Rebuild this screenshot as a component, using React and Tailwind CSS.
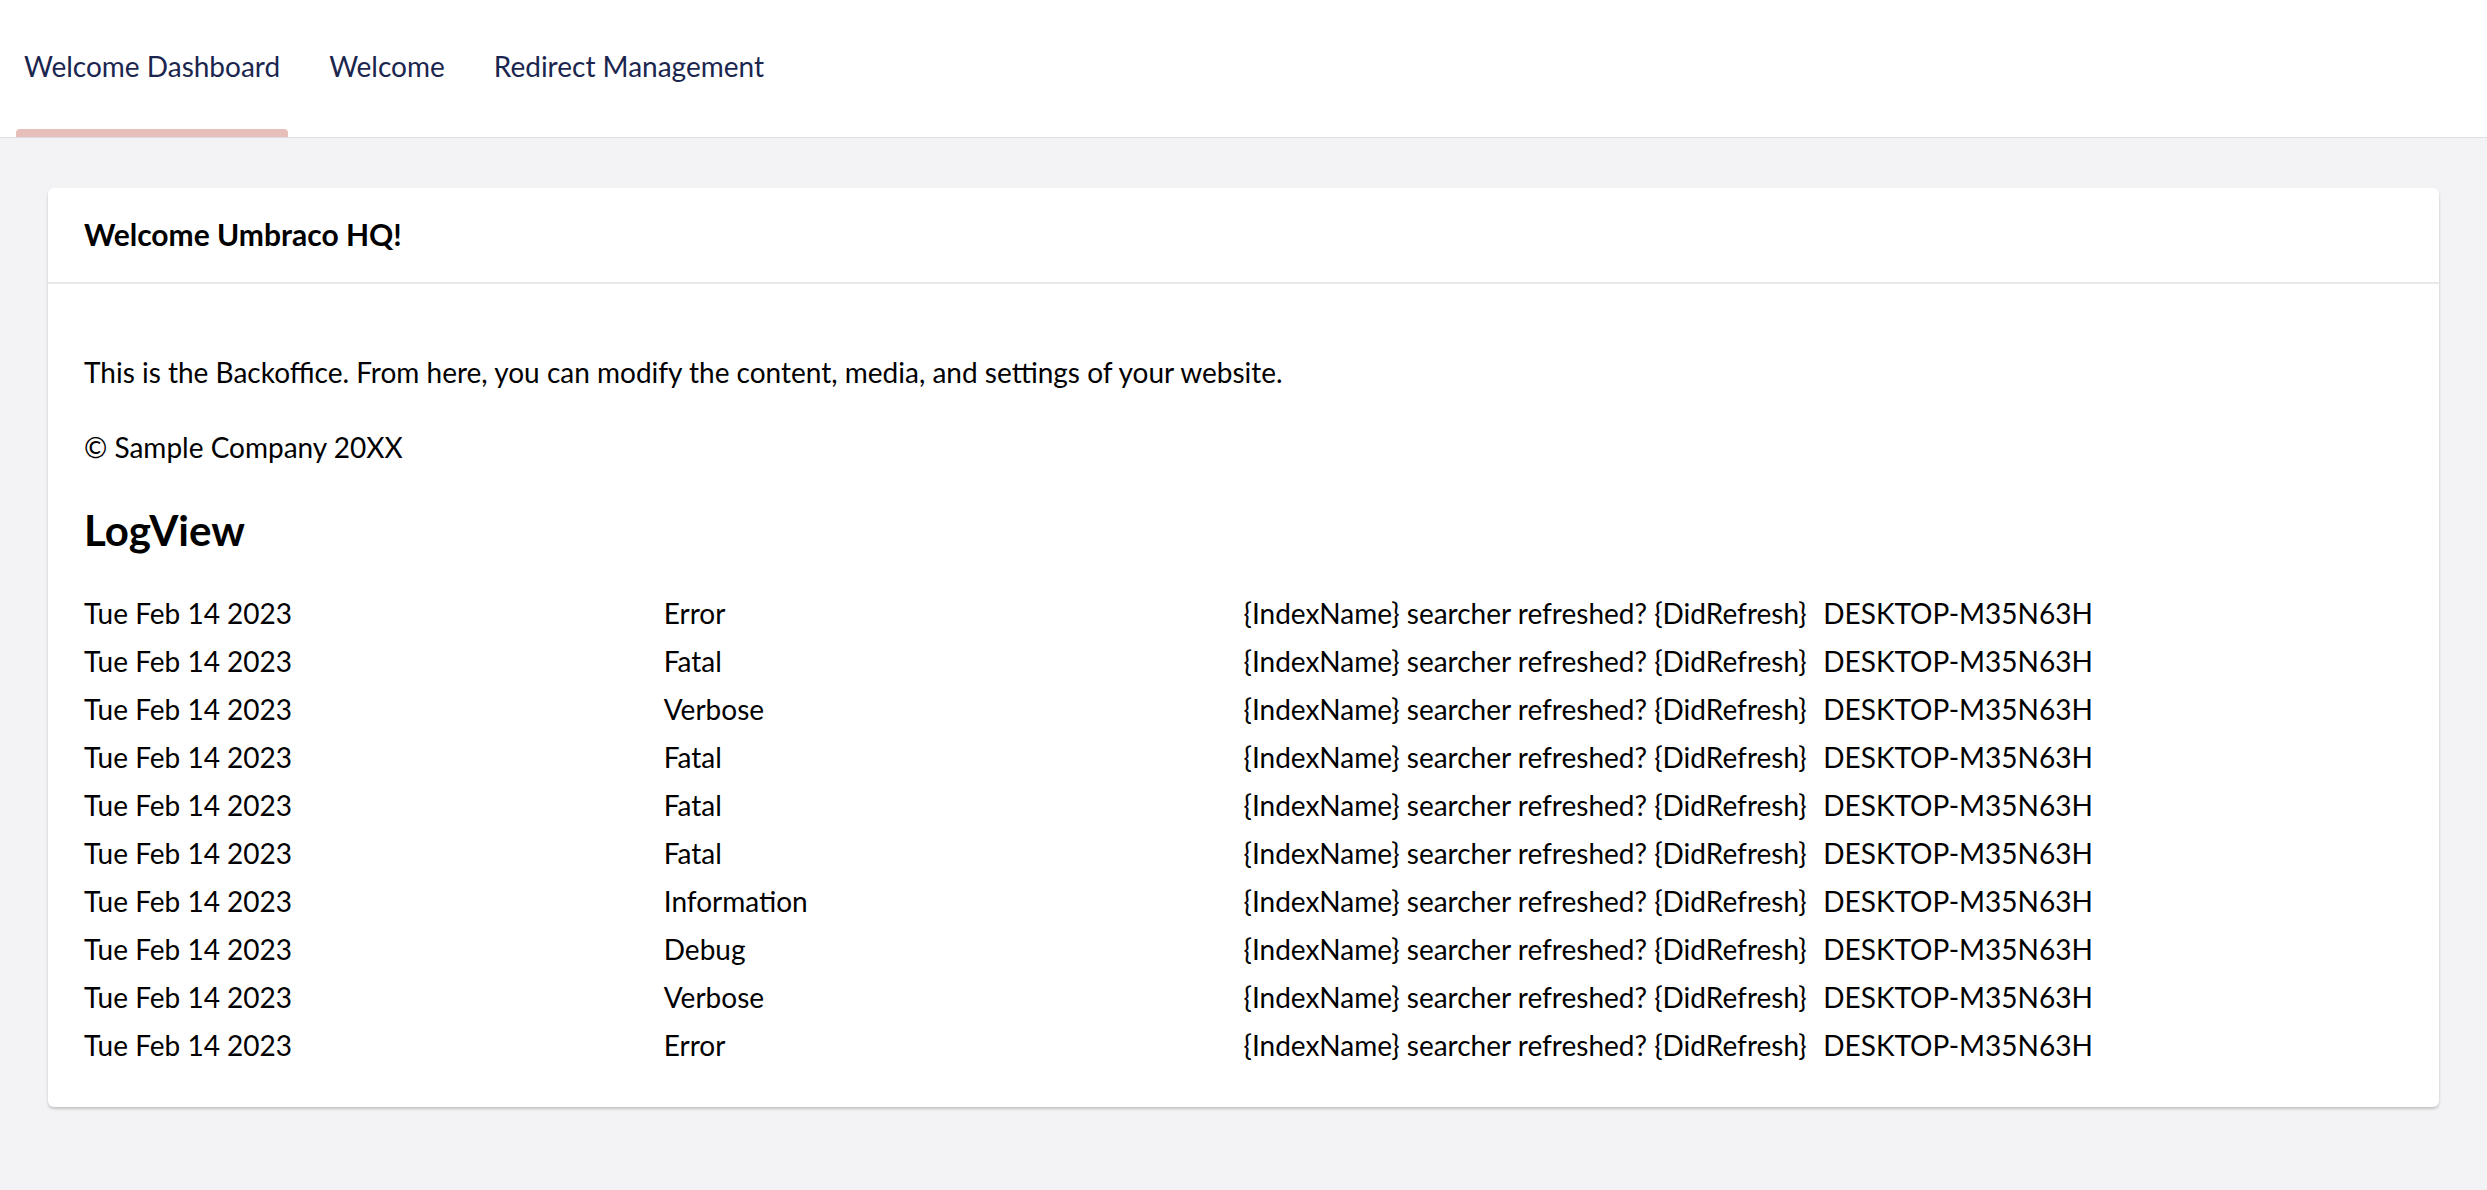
import React from "react";

const rows = [
  "Error",
  "Fatal",
  "Verbose",
  "Fatal",
  "Fatal",
  "Fatal",
  "Information",
  "Debug",
  "Verbose",
  "Error",
];

export default function App() {
  return (
    <div
      className="min-h-screen bg-[#f3f3f5] text-black"
      style={{ fontFamily: "Lato, 'Open Sans', sans-serif" }}
    >
      <header className="h-[138px] bg-white border-b border-[#dedee2] flex pl-4 gap-[33px]">
        <div className="flex flex-col h-full">
          <div className="flex-1 flex items-center px-2 pt-[3px] text-[28px] text-[#1b264f]">
            Welcome Dashboard
          </div>
          <div className="h-[8px] rounded-t-[4px] bg-[#e6bfbb]" />
        </div>
        <div className="flex flex-col h-full">
          <div className="flex-1 flex items-center px-2 pt-[3px] text-[28px] text-[#1b264f]">
            Welcome
          </div>
          <div className="h-[8px]" />
        </div>
        <div className="flex flex-col h-full">
          <div className="flex-1 flex items-center px-2 pt-[3px] text-[28px] text-[#1b264f]">
            Redirect Management
          </div>
          <div className="h-[8px]" />
        </div>
      </header>

      <div className="px-12 pt-[50px]">
        <div className="bg-white rounded-[6px] shadow-[0_2px_3px_rgba(0,0,0,0.2)]">
          <div className="h-[96px] px-9 pb-[2px] flex items-center border-b-2 border-[#e9e9eb] text-[30px] font-bold">
            Welcome Umbraco HQ!
          </div>
          <div className="px-9 pt-[64px] pb-[38px] text-[28px]">
            <p className="leading-[48px]">
              This is the Backoffice. From here, you can modify the content, media, and settings of your website.
            </p>
            <p className="leading-[48px] mt-[27px]">© Sample Company 20XX</p>
            <h2 className="leading-[56px] mt-[31px] text-[42px] font-bold">LogView</h2>
            <div className="mt-[31px]">
              {rows.map((lvl, i) => (
                <div key={i} className="grid grid-cols-4 leading-[48px]">
                  <div>Tue Feb 14 2023</div>
                  <div>{lvl}</div>
                  <div className="whitespace-nowrap">{"{IndexName} searcher refreshed? {DidRefresh}"}</div>
                  <div>DESKTOP-M35N63H</div>
                </div>
              ))}
            </div>
          </div>
        </div>
      </div>
    </div>
  );
}
